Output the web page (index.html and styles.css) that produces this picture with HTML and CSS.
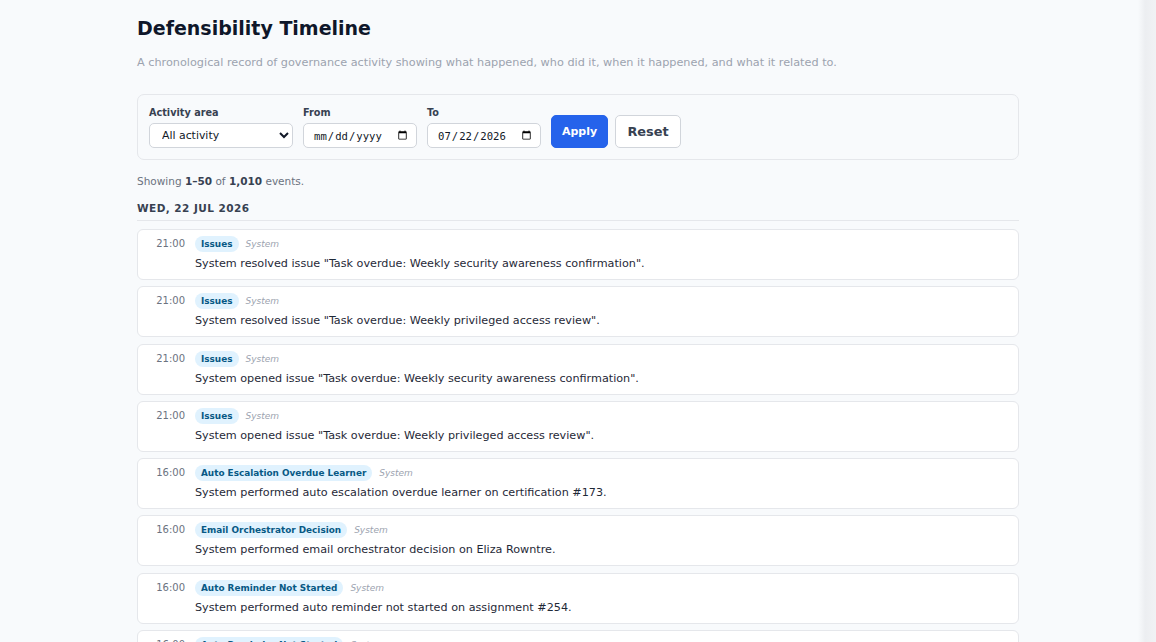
FILE: index.html
```html
<!DOCTYPE html>
<html>
<head>
<meta charset="utf-8">
<link rel="stylesheet" href="styles.css">
</head>
<body>
<main class="page">
  <h1 class="title">Defensibility Timeline</h1>
  <p class="subtitle">A chronological record of governance activity showing what happened, who did it, when it happened, and what it related to.</p>

  <form class="filters">
    <label class="field">
      <span class="label">Activity area</span>
      <select class="control select"><option>All activity</option></select>
    </label>
    <label class="field">
      <span class="label">From</span>
      <input class="control date" type="date">
    </label>
    <label class="field">
      <span class="label">To</span>
      <input class="control date" type="date" value="2026-07-22">
    </label>
    <button type="button" class="btn btn-primary">Apply</button>
    <button type="button" class="btn btn-secondary">Reset</button>
  </form>

  <p class="count">Showing <b>1–50</b> of <b>1,010</b> events.</p>

  <h2 class="day">Wed, 22 Jul 2026</h2>

  <ul class="events">
    <li class="event"><span class="time">21:00</span><div class="body"><div class="meta"><span class="badge">Issues</span><span class="actor">System</span></div><p class="msg">System resolved issue "Task overdue: Weekly security awareness confirmation".</p></div></li>
    <li class="event"><span class="time">21:00</span><div class="body"><div class="meta"><span class="badge">Issues</span><span class="actor">System</span></div><p class="msg">System resolved issue "Task overdue: Weekly privileged access review".</p></div></li>
    <li class="event"><span class="time">21:00</span><div class="body"><div class="meta"><span class="badge">Issues</span><span class="actor">System</span></div><p class="msg">System opened issue "Task overdue: Weekly security awareness confirmation".</p></div></li>
    <li class="event"><span class="time">21:00</span><div class="body"><div class="meta"><span class="badge">Issues</span><span class="actor">System</span></div><p class="msg">System opened issue "Task overdue: Weekly privileged access review".</p></div></li>
    <li class="event"><span class="time">16:00</span><div class="body"><div class="meta"><span class="badge">Auto Escalation Overdue Learner</span><span class="actor">System</span></div><p class="msg">System performed auto escalation overdue learner on certification #173.</p></div></li>
    <li class="event"><span class="time">16:00</span><div class="body"><div class="meta"><span class="badge">Email Orchestrator Decision</span><span class="actor">System</span></div><p class="msg">System performed email orchestrator decision on Eliza Rowntre.</p></div></li>
    <li class="event"><span class="time">16:00</span><div class="body"><div class="meta"><span class="badge">Auto Reminder Not Started</span><span class="actor">System</span></div><p class="msg">System performed auto reminder not started on assignment #254.</p></div></li>
    <li class="event"><span class="time">16:00</span><div class="body"><div class="meta"><span class="badge">Auto Reminder Not Started</span><span class="actor">System</span></div><p class="msg">System performed auto reminder not started on assignment #253.</p></div></li>
  </ul>
</main>
<div class="edge"></div>
</body>
</html>
```

FILE: styles.css
```css
* { box-sizing: border-box; }
html, body { margin: 0; padding: 0; }
body {
  background: #f8fafc;
  font-family: "DejaVu Sans", "Noto Sans", sans-serif;
  color: #111827;
  height: 642px;
  overflow: hidden;
}
.page {
  width: 882px;
  margin: 0 auto;
  padding-top: 15px;
}
.title {
  font-size: 19px;
  font-weight: 700;
  margin: 0;
  line-height: 26px;
  color: #0f172a;
}
.subtitle {
  margin: 14px 0 0;
  font-size: 11.25px;
  line-height: 16px;
  color: #9ca3af;
}
.filters {
  margin-top: 23px;
  display: flex;
  align-items: flex-end;
  gap: 10px;
  padding: 0 11px 11px;
  border: 1px solid #e5e7eb;
  border-radius: 7px;
  background: #f8fafc;
  height: 66px;
}
.field { display: flex; flex-direction: column; gap: 3px; }
.label {
  font-size: 9.7px;
  font-weight: 700;
  color: #374151;
  line-height: 14px;
}
.control {
  height: 25px;
  border: 1px solid #d1d5db;
  border-radius: 5px;
  background: #fff;
  font-family: "DejaVu Sans", sans-serif;
  font-size: 10.9px;
  color: #111827;
  padding: 0 6px;
}
.select { width: 144px; padding-left: 8px; }
.date { width: 114px; font-family: "DejaVu Sans Mono", monospace; font-size: 10.6px; padding: 0 6px 0 9px; }
.btn {
  height: 33px;
  border-radius: 5px;
  font-family: "DejaVu Sans", sans-serif;
  font-weight: 700;
  cursor: pointer;
  padding: 0;
}
.btn-primary {
  background: #2563eb;
  color: #fff;
  border: 1px solid #2563eb;
  font-size: 11px;
  width: 57px;
}
.btn-secondary {
  background: #fff;
  color: #374151;
  border: 1px solid #d1d5db;
  font-size: 12.9px;
  width: 66px;
  margin-left: -3px;
}
.count {
  margin: 14px 0 0;
  font-size: 10.5px;
  line-height: 14px;
  color: #6b7280;
}
.count b { font-weight: 700; color: #374151; }
.day {
  margin: 13px 0 0;
  padding-bottom: 5px;
  border-bottom: 1px solid #e5e7eb;
  font-size: 10.5px;
  font-weight: 700;
  text-transform: uppercase;
  letter-spacing: 0.45px;
  color: #374151;
  line-height: 14px;
}
.events {
  list-style: none;
  margin: 8px 0 0;
  padding: 0;
  display: flex;
  flex-direction: column;
  gap: 6.3px;
}
.event {
  display: flex;
  gap: 10px;
  background: #fff;
  border: 1px solid #e5e7eb;
  border-radius: 6px;
  height: 51px;
  flex-shrink: 0;
  padding: 6px 10px 0 9px;
}
.time {
  width: 38px;
  text-align: right;
  font-size: 10px;
  color: #6b7280;
  line-height: 16px;
}
.body { display: flex; flex-direction: column; }
.meta { display: flex; align-items: center; gap: 7px; height: 16px; }
.badge {
  background: #e0f2fe;
  color: #075985;
  font-size: 8.9px;
  font-weight: 700;
  border-radius: 8px;
  padding: 2px 6px;
  line-height: 12px;
}
.actor {
  font-size: 9px;
  font-style: italic;
  color: #9ca3af;
}
.msg {
  margin: 4px 0 0;
  font-size: 11.2px;
  line-height: 15px;
  color: #1f2937;
}
.edge {
  position: fixed;
  top: 0;
  right: 0;
  width: 18px;
  height: 100%;
  background: linear-gradient(to right, #f8fafc, #eceef1 40%, #f1f2f4);
}
```
